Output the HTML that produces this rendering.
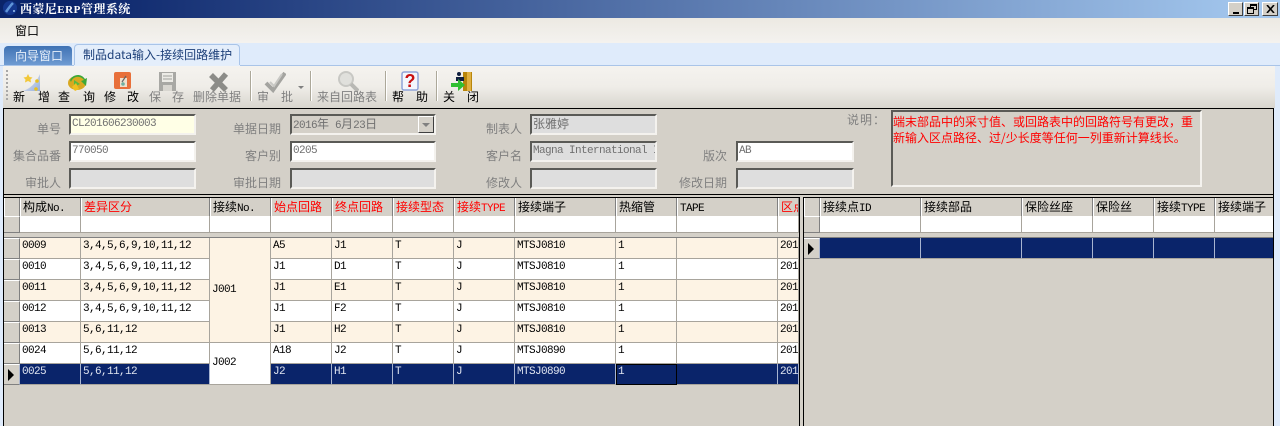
<!DOCTYPE html>
<html><head><meta charset="utf-8">
<style>
html,body{margin:0;padding:0;width:1280px;height:426px;overflow:hidden;background:#dfebfb}
*{box-sizing:border-box}
body{position:relative;font-family:"WenQuanYi Zen Hei","Noto Sans CJK SC",sans-serif;font-size:12px;color:#000}
.a{position:absolute;white-space:nowrap}
i{font-style:normal;font-family:"Liberation Mono",monospace;font-size:11px;letter-spacing:-.6px;line-height:0}
.lb{position:absolute;color:#808080;text-align:right;white-space:nowrap;line-height:14px}
.in{position:absolute;height:21px;background:#fff;border:2px solid;border-color:#5a5a56 #f4f2ee #f4f2ee #5a5a56;color:#707070;font-family:"Liberation Mono",monospace;font-size:11px;letter-spacing:-.6px;line-height:14px;padding:1px 0 0 1px;white-space:nowrap;overflow:hidden}
.in span{letter-spacing:0}
.dis{background:#dedede}
.t{position:absolute;white-space:nowrap;line-height:14px;top:90px}
.g{color:#808080}
.sep{position:absolute;top:71px;height:30px;width:2px;border-left:1px solid #aca899;border-right:1px solid #fff}
table{position:absolute;border-collapse:separate;border-spacing:0;table-layout:fixed}
td{padding:0 0 0 2px;border-right:1px solid #a8a49c;border-bottom:1px solid #a8a49c;overflow:hidden;white-space:nowrap;font-family:"Liberation Mono",monospace;font-size:11px;letter-spacing:-.6px;word-spacing:-6px;line-height:13px;vertical-align:top;padding-top:2px}
td.h{height:18px;max-height:18px;background:#d4d0c8;border-left:1px solid #fff;border-right:1px solid #808080;border-bottom:0;font-family:"WenQuanYi Zen Hei","Noto Sans CJK SC",sans-serif;font-size:12px;letter-spacing:0;word-spacing:0;padding-top:3px;line-height:12px}
td.r{color:#f00}
td.rh{background:#d4d0c8;border:0;border-top:1px solid #fff;border-right:1px solid #808080;border-bottom:1px solid #808080;padding:0}
tr.f td{height:17px;background:#fff}
tr.sp td{height:5px;background:#d4d0c8;border:0;padding:0;border-bottom:1px solid #808080}
tr.d td{height:21px}
tr.c td{background:#fdf3e4}
tr.w td{background:#fff}
tr.d td.rh,tr.f td.rh{background:#d4d0c8}
tr.s td{background:#0a246a;color:#dfe4f0;border-right-color:#a8b4d0}
td.mid{vertical-align:middle;padding-top:0}
.arrow{width:0;height:0;border-left:6px solid #000;border-top:6px solid transparent;border-bottom:6px solid transparent;margin:4px 0 0 4px}
</style></head><body>

<!-- title bar -->
<div class="a" style="left:0;top:0;width:1280px;height:18px;background:linear-gradient(90deg,#0a246a 0,#0a246a 5%,#a6caf0 100%)"></div>
<svg class="a" style="left:2px;top:0" width="16" height="18" viewBox="0 0 16 18"><circle cx="8" cy="8" r="7" fill="#14378e"/><path d="M4 12C6 9 8 6 11 3" stroke="#5f94d8" stroke-width="2.500" fill="none"/><circle cx="12" cy="11" r="1" fill="#9cc4f0"/></svg>
<div class="a" style="left:20px;top:2px;color:#fff;font-weight:bold;line-height:14px;font-family:'Noto Serif CJK SC',serif;font-size:12px;letter-spacing:.4px">西蒙尼<span style="font-family:'Liberation Serif',serif;font-size:11px;letter-spacing:.6px">ERP</span>管理系统</div>
<div class="a" style="left:1228px;top:2px;width:15px;height:14px;background:#d4d0c8;border:1px solid;border-color:#fff #404040 #404040 #fff"><div class="a" style="left:4px;top:9px;width:6px;height:2px;background:#000"></div></div>
<div class="a" style="left:1244px;top:2px;width:15px;height:14px;background:#d4d0c8;border:1px solid;border-color:#fff #404040 #404040 #fff"><div class="a" style="left:5px;top:1px;width:7px;height:6px;border:1px solid #000;border-top-width:2px"></div><div class="a" style="left:2px;top:4px;width:7px;height:7px;border:1px solid #000;border-top-width:2px;background:#d4d0c8"></div></div>
<div class="a" style="left:1262px;top:2px;width:16px;height:14px;background:#d4d0c8;border:1px solid;border-color:#fff #404040 #404040 #fff"><svg class="a" style="left:3px;top:2px" width="9" height="8"><path d="M1 0L8 8M8 0L1 8" stroke="#000" stroke-width="1.6"/></svg></div>

<!-- menu -->
<div class="a" style="left:0;top:18px;width:1280px;height:25px;background:linear-gradient(#ece9e2,#f4f2ef)"></div>
<div class="a" style="left:15px;top:24px;line-height:14px">窗口</div>

<!-- tabs -->
<div class="a" style="left:0;top:43px;width:1280px;height:23px;background:#dfebfb"></div>
<div class="a" style="left:4px;top:46px;width:68px;height:19px;background:linear-gradient(#3f72b4,#6f9bd2);border-radius:4px 4px 0 0;color:#e8f0fa;padding:3px 0 0 11px;line-height:14px">向导窗口</div>
<div class="a" style="left:74px;top:44px;width:166px;height:22px;background:#e4eefb;border:1px solid #a9c4e8;border-bottom:0;border-radius:4px 4px 0 0;color:#1c3f78;padding:3px 0 0 8px;line-height:14px">制品data输入-接续回路维护</div>
<div class="a" style="left:0;top:65px;width:1280px;height:1px;background:#a9c4e8"></div>
<div class="a" style="left:74px;top:65px;width:166px;height:1px;background:#e4eefb"></div>

<!-- toolbar -->
<div class="a" style="left:3px;top:66px;width:1272px;height:42px;background:linear-gradient(#f5f3ef 0,#efede8 50%,#d8d5ce 100%)"></div>
<div class="a" style="left:6px;top:70px;width:2px;height:32px;background:repeating-linear-gradient(#a8a8a8 0 2px,transparent 2px 4px)"></div>
<div class="a" style="left:0;top:66px;width:3px;height:360px;background:#dfebfb"></div>
<div class="a" style="left:1275px;top:66px;width:5px;height:360px;background:#dfebfb"></div>

<svg class="a" style="left:20px;top:71px" width="22" height="22" viewBox="0 0 22 22"><defs><linearGradient id="ng" x1="0" y1="0" x2="1" y2="1"><stop offset="0" stop-color="#f2f0ec"/><stop offset="1" stop-color="#93aee0"/></linearGradient></defs><path d="M20 3V20H3C9 18 15 14 20 3Z" fill="url(#ng)"/><path d="M8 3l1.500 3 3 .5-2 2 .5 3-3-1.500-3 1.500.5-3-2-2 3-.5z" fill="#f2c838"/><circle cx="17" cy="10" r="1.800" fill="#e8c020"/><circle cx="16" cy="18" r="1.800" fill="#e8c020"/></svg>
<svg class="a" style="left:67px;top:71px" width="22" height="22" viewBox="0 0 22 22"><ellipse cx="10" cy="12" rx="9" ry="7" fill="#d8a820"/><path d="M4 11C6 5 13 4 17 9L14 10 19 15 20 7 18 8C14 2 6 3 3 9Z" fill="#3da838"/><path d="M7 9L13 13 7 16Z" fill="#58b840"/><path d="M5 16l4-4 3 6-4 2z" fill="#f0c020"/></svg>
<svg class="a" style="left:114px;top:72px" width="18" height="18" viewBox="0 0 18 18"><rect x="0" y="0" width="17" height="17" rx="2" fill="#e8703a"/><rect x="6" y="6" width="7" height="9" fill="#efe0cc"/><path d="M12 4L8 10" stroke="#666" stroke-width="1.200"/><circle cx="9" cy="12" r="1.800" fill="#70b0a0"/></svg>
<svg class="a" style="left:158px;top:72px" width="20" height="20" viewBox="0 0 20 20"><path d="M1 0H18V19H1Z" fill="#a8a8a4"/><rect x="4" y="1" width="11" height="9" fill="#ecebe6"/><path d="M5 4H14M5 7H14" stroke="#a0a09c"/><rect x="5" y="13" width="9" height="6" fill="#d8d6d0"/></svg>
<svg class="a" style="left:208px;top:72px" width="22" height="20" viewBox="0 0 22 20"><path d="M3 3L18 18M18 2L4 18" stroke="#8c8c88" stroke-width="5.500"/></svg>
<svg class="a" style="left:264px;top:71px" width="22" height="22" viewBox="0 0 22 22"><path d="M2 12L9 19 21 2" stroke="#a4a4a0" stroke-width="4" fill="none"/><path d="M6 11L10 15 18 3" stroke="#c8c8c4" stroke-width="2" fill="none"/></svg>
<div class="a" style="left:298px;top:86px;width:0;height:0;border-left:3px solid transparent;border-right:3px solid transparent;border-top:3px solid #808080"></div>
<svg class="a" style="left:337px;top:71px" width="22" height="22" viewBox="0 0 22 22"><circle cx="9" cy="8" r="7" fill="#e0e0dc" stroke="#c8c8c4" stroke-width="2"/><path d="M14 13L21 20" stroke="#b8b8b4" stroke-width="4"/></svg>
<svg class="a" style="left:400px;top:71px" width="20" height="21" viewBox="0 0 20 21"><rect x="2" y="1" width="16" height="18" rx="2" fill="#f4f6fc" stroke="#8fa3d8" stroke-width="1.500"/><text x="4.500" y="16" font-family="Liberation Sans" font-weight="bold" font-size="18" fill="#c81010">?</text></svg>
<svg class="a" style="left:450px;top:71px" width="23" height="21" viewBox="0 0 23 21"><rect x="13" y="1" width="9" height="19" fill="#b8860b"/><rect x="17" y="1" width="4" height="19" fill="#e0b040"/><circle cx="9" cy="3" r="2" fill="#102040"/><path d="M6 6H14V10H6Z" fill="#102040"/><path d="M1 12H8V8L15 14 8 20V16H1Z" fill="#30c030"/></svg>

<div class="t" style="left:13px">新</div><div class="t" style="left:38px">增</div>
<div class="t" style="left:58px">查</div><div class="t" style="left:83px">询</div>
<div class="t" style="left:104px">修</div><div class="t" style="left:127px">改</div>
<div class="t g" style="left:149px">保</div><div class="t g" style="left:172px">存</div>
<div class="t g" style="left:193px">删除单据</div>
<div class="sep" style="left:250px"></div>
<div class="t g" style="left:257px">审</div><div class="t g" style="left:281px">批</div>
<div class="sep" style="left:310px"></div>
<div class="t g" style="left:317px">来自回路表</div>
<div class="sep" style="left:385px"></div>
<div class="t" style="left:392px">帮</div><div class="t" style="left:416px">助</div>
<div class="sep" style="left:436px"></div>
<div class="t" style="left:443px">关</div><div class="t" style="left:467px">闭</div>

<!-- form panel -->
<div class="a" style="left:3px;top:108px;width:1271px;height:318px;background:#d4d0c8;border:1px solid #000;border-bottom:0"></div>

<div class="lb" style="left:0;width:61px;top:122px">单号</div>
<div class="lb" style="left:0;width:61px;top:149px">集合品番</div>
<div class="lb" style="left:0;width:61px;top:176px">审批人</div>
<div class="in" style="left:69px;top:114px;width:127px;background:#ffffe6">CL201606230003</div>
<div class="in" style="left:69px;top:141px;width:127px">770050</div>
<div class="in dis" style="left:69px;top:168px;width:127px"></div>

<div class="lb" style="left:200px;width:81px;top:122px">单据日期</div>
<div class="lb" style="left:200px;width:81px;top:149px">客户别</div>
<div class="lb" style="left:200px;width:81px;top:176px">审批日期</div>
<div class="in" style="left:290px;top:114px;width:146px;background:#d4d0c8">2016<span style="font-family:'WenQuanYi Zen Hei','Noto Sans CJK SC',sans-serif;font-size:12px">年</span> 6<span style="font-family:'WenQuanYi Zen Hei','Noto Sans CJK SC',sans-serif;font-size:12px">月</span>23<span style="font-family:'WenQuanYi Zen Hei','Noto Sans CJK SC',sans-serif;font-size:12px">日</span></div>
<div class="a" style="left:418px;top:116px;width:16px;height:17px;background:#d4d0c8;border:1px solid;border-color:#fff #404040 #404040 #fff"><div class="a" style="left:3px;top:6px;width:0;height:0;border-left:4px solid transparent;border-right:4px solid transparent;border-top:4px solid #808080"></div></div>
<div class="in" style="left:290px;top:141px;width:146px">0205</div>
<div class="in dis" style="left:290px;top:168px;width:146px"></div>

<div class="lb" style="left:450px;width:72px;top:122px">制表人</div>
<div class="lb" style="left:450px;width:72px;top:149px">客户名</div>
<div class="lb" style="left:450px;width:72px;top:176px">修改人</div>
<div class="in dis" style="left:530px;top:114px;width:127px;font-family:'WenQuanYi Zen Hei','Noto Sans CJK SC',sans-serif;font-size:12px;letter-spacing:0">张雅婷</div>
<div class="in dis" style="left:530px;top:141px;width:127px">Magna International Inc</div>
<div class="in dis" style="left:530px;top:168px;width:127px"></div>

<div class="lb" style="left:826px;width:60px;top:113px;letter-spacing:1px">说明：</div>
<div class="a" style="left:891px;top:110px;width:311px;height:77px;background:#d4d0c8;border:2px solid;border-color:#5a5a56 #f4f2ee #f4f2ee #5a5a56;color:#f00;line-height:16px;padding:2px 0 0 0;white-space:normal">端末部品中的采寸值、或回路表中的回路符号有更改，重<br>新输入区点路径、过/少长度等任何一列重新计算线长。</div>

<div class="lb" style="left:660px;width:67px;top:149px">版次</div>
<div class="lb" style="left:660px;width:67px;top:176px">修改日期</div>
<div class="in" style="left:736px;top:141px;width:118px">AB</div>
<div class="in dis" style="left:736px;top:168px;width:118px"></div>

<!-- grids frames -->
<div class="a" style="left:3px;top:194px;width:1271px;height:232px;background:#d4d0c8;border-top:1px solid #000;border-left:1px solid #000;border-right:1px solid #000"></div>
<div class="a" style="left:3px;top:197px;width:797px;height:229px;border:1px solid #000;border-bottom:0"></div>
<div class="a" style="left:803px;top:197px;width:471px;height:229px;border:1px solid #000;border-bottom:0"></div>

<!-- left grid -->
<div class="a" style="left:4px;top:198px;width:795px;height:228px;overflow:hidden">
<table style="left:0;top:0;width:795px">
<colgroup><col style="width:16px"><col style="width:61px"><col style="width:129px"><col style="width:61px"><col style="width:61px"><col style="width:61px"><col style="width:61px"><col style="width:61px"><col style="width:101px"><col style="width:61px"><col style="width:101px"><col style="width:21px"></colgroup>
<tr><td class="h"></td><td class="h">构成<i>No.</i></td><td class="h r">差异区分</td><td class="h">接续<i>No.</i></td><td class="h r">始点回路</td><td class="h r">终点回路</td><td class="h r">接续型态</td><td class="h r">接续<i>TYPE</i></td><td class="h">接续端子</td><td class="h">热缩管</td><td class="h"><i>TAPE</i></td><td class="h r">区点</td></tr>
<tr class="f"><td class="rh"></td><td></td><td></td><td></td><td></td><td></td><td></td><td></td><td></td><td></td><td></td><td></td></tr>
<tr class="sp"><td colspan="12"></td></tr>
<tr class="d c"><td class="rh"></td><td>0009</td><td>3, 4, 5, 6, 9, 10, 11, 12</td><td rowspan="5" class="mid">J001</td><td>A5</td><td>J1</td><td>T</td><td>J</td><td>MTSJ0810</td><td>1</td><td></td><td>201</td></tr>
<tr class="d w"><td class="rh"></td><td>0010</td><td>3, 4, 5, 6, 9, 10, 11, 12</td><td>J1</td><td>D1</td><td>T</td><td>J</td><td>MTSJ0810</td><td>1</td><td></td><td>201</td></tr>
<tr class="d c"><td class="rh"></td><td>0011</td><td>3, 4, 5, 6, 9, 10, 11, 12</td><td>J1</td><td>E1</td><td>T</td><td>J</td><td>MTSJ0810</td><td>1</td><td></td><td>201</td></tr>
<tr class="d w"><td class="rh"></td><td>0012</td><td>3, 4, 5, 6, 9, 10, 11, 12</td><td>J1</td><td>F2</td><td>T</td><td>J</td><td>MTSJ0810</td><td>1</td><td></td><td>201</td></tr>
<tr class="d c"><td class="rh"></td><td>0013</td><td>5, 6, 11, 12</td><td>J1</td><td>H2</td><td>T</td><td>J</td><td>MTSJ0810</td><td>1</td><td></td><td>201</td></tr>
<tr class="d w"><td class="rh"></td><td>0024</td><td>5, 6, 11, 12</td><td rowspan="2" class="mid" style="background:#fff;color:#000">J002</td><td>A18</td><td>J2</td><td>T</td><td>J</td><td>MTSJ0890</td><td>1</td><td></td><td>201</td></tr>
<tr class="d s"><td class="rh"><div class="arrow"></div></td><td>0025</td><td>5, 6, 11, 12</td><td>J2</td><td>H1</td><td>T</td><td>J</td><td>MTSJ0890</td><td style="outline:1px solid #000;outline-offset:-1px">1</td><td></td><td>201</td></tr>
</table>
</div>

<!-- right grid -->
<div class="a" style="left:804px;top:198px;width:469px;height:228px;overflow:hidden">
<table style="left:0;top:0;width:470px">
<colgroup><col style="width:16px"><col style="width:101px"><col style="width:101px"><col style="width:71px"><col style="width:61px"><col style="width:61px"><col style="width:59px"></colgroup>
<tr><td class="h"></td><td class="h">接续点<i>ID</i></td><td class="h">接续部品</td><td class="h">保险丝座</td><td class="h">保险丝</td><td class="h">接续<i>TYPE</i></td><td class="h">接续端子</td></tr>
<tr class="f"><td class="rh"></td><td></td><td></td><td></td><td></td><td></td><td></td></tr>
<tr class="sp"><td colspan="7"></td></tr>
<tr class="d s"><td class="rh"><div class="arrow"></div></td><td></td><td></td><td></td><td></td><td></td><td></td></tr>
</table>
</div>

</body></html>
